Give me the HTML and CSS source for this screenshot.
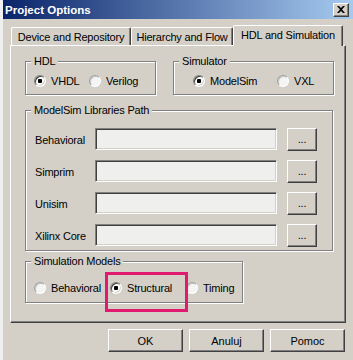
FILE: index.html
```html
<!DOCTYPE html>
<html lang="pl">
<head>
    <meta charset="UTF-8">
    <meta name="viewport" content="width=device-width, initial-scale=1.0">
    <title>Project Options</title>
    <link rel="stylesheet" href="styles.css">
</head>
<body>
    <div class="window">
        <div class="titlebar">
            <span class="title">Project Options</span>
            <span class="close">
                <svg width="8" height="7" viewBox="0 0 8 7"><path d="M0 0h2l2 2 2-2h2L5 3.5 8 7H6L4 5 2 7H0l3-3.5z" fill="#000"/></svg>
            </span>
        </div>

        <div class="dialog-body">
            <div class="tabs">
                <div class="tab tab-device">Device and Repository</div>
                <div class="tab tab-flow">Hierarchy and Flow</div>
                <div class="tab tab-hdl active">HDL and Simulation</div>
            </div>

            <div class="panel">
                <div class="top-row">
                    <fieldset class="group group-hdl">
                        <legend>HDL</legend>
                        <div class="options">
                            <label class="option opt-vhdl"><span class="radio checked"></span>VHDL</label>
                            <label class="option"><span class="radio"></span>Verilog</label>
                        </div>
                    </fieldset>
                    <fieldset class="group group-sim">
                        <legend>Simulator</legend>
                        <div class="options">
                            <label class="option opt-modelsim"><span class="radio checked"></span>ModelSim</label>
                            <label class="option"><span class="radio"></span>VXL</label>
                        </div>
                    </fieldset>
                </div>

                <fieldset class="group group-libs">
                    <legend>ModelSim Libraries Path</legend>
                    <div class="lib-grid">
                        <span class="lib-label">Behavioral</span>
                        <span class="field"></span>
                        <span class="browse">...</span>

                        <span class="lib-label">Simprim</span>
                        <span class="field"></span>
                        <span class="browse">...</span>

                        <span class="lib-label">Unisim</span>
                        <span class="field"></span>
                        <span class="browse">...</span>

                        <span class="lib-label">Xilinx Core</span>
                        <span class="field"></span>
                        <span class="browse">...</span>
                    </div>
                </fieldset>

                <fieldset class="group group-models">
                    <legend>Simulation Models</legend>
                    <div class="options">
                        <label class="option opt-model"><span class="radio"></span>Behavioral</label>
                        <label class="option opt-model"><span class="radio checked"></span>Structural</label>
                        <label class="option"><span class="radio"></span>Timing</label>
                    </div>
                </fieldset>
            </div>

            <div class="buttons">
                <button class="btn">OK</button>
                <button class="btn">Anuluj</button>
                <button class="btn">Pomoc</button>
            </div>
        </div>

        <div class="highlight"></div>
    </div>
</body>
</html>
```

FILE: styles.css
```css
/* base */
body {
    margin: 0;
    width: 353px;
    height: 360px;
    overflow: hidden;
    background-color: #f0f0f0;
    font-family: "Liberation Sans", Arial, sans-serif;
    font-size: 11px;
    letter-spacing: -0.2px;
    color: #000;
}
.window {
    position: relative;
    margin-left: 3px;
    height: 360px;
    background-color: #d4d0c8;
}

/* title bar */
.titlebar {
    height: 19px;
    display: flex;
    align-items: center;
    justify-content: space-between;
    padding: 0 4px 0 2px;
    background: linear-gradient(to right, #0a246a, #a6caf0);
}
.title {
    color: #fff;
    font-weight: bold;
    font-size: 11.5px;
    letter-spacing: 0;
}
.close {
    width: 16px;
    height: 14px;
    box-sizing: border-box;
    display: flex;
    align-items: center;
    justify-content: center;
    background-color: #d4d0c8;
    border: 1px solid;
    border-color: #fff #404040 #404040 #fff;
    box-shadow: inset -1px -1px 0 #808080;
}

.dialog-body {
    padding: 6px 0 0 7px;
}

/* tabs */
.tabs {
    display: flex;
    align-items: flex-end;
    height: 20px;
    padding-left: 1px;
}
.tab {
    height: 18px;
    box-sizing: border-box;
    display: flex;
    align-items: center;
    justify-content: center;
    border: 1px solid;
    border-bottom: none;
    border-color: #fff #404040 transparent #fff;
    border-radius: 2px 2px 0 0;
    box-shadow: inset -1px 0 0 #808080;
}
.tab-device { width: 120px; }
.tab-flow { width: 102px; }
.tab-hdl { width: 110px; }
.tab.active {
    position: relative;
    z-index: 1;
    height: 21px;
    margin-bottom: -1px;
    padding-bottom: 2px;
    background-color: #d4d0c8;
}

/* panel */
.panel {
    width: 336px;
    height: 278px;
    box-sizing: border-box;
    padding: 9px 0 0 14px;
    border: 1px solid;
    border-color: #fff #404040 #404040 #fff;
    box-shadow: inset -1px -1px 0 #808080;
}
.top-row {
    display: flex;
    gap: 17px;
}

/* group boxes */
.group {
    margin: 0;
    padding-left: 0;
    padding-right: 0;
    min-inline-size: 0;
    box-sizing: border-box;
    border: 1px solid #808080;
    box-shadow: inset 1px 1px 0 #fff, 1px 1px 0 #fff;
}
.group legend {
    margin-left: 5px;
    padding: 0 3px;
    line-height: 13px;
    background-color: #d4d0c8;
}
.group-hdl {
    width: 131px;
    padding-top: 6px;
    padding-bottom: 7px;
}
.group-hdl .options { padding-left: 8px; }
.group-sim {
    width: 161px;
    padding-top: 6px;
    padding-bottom: 7px;
}
.group-sim .options { padding-left: 19px; }
.group-libs {
    width: 308px;
    margin-top: 9px;
    padding-top: 11px;
    padding-bottom: 3px;
}
.group-models {
    width: 218px;
    margin-top: 4px;
    padding-top: 13px;
    padding-bottom: 8px;
}
.group-models .options { padding-left: 8px; }

/* radio buttons */
.options {
    display: flex;
}
.option {
    display: flex;
    align-items: center;
    gap: 5px;
    height: 13px;
}
.opt-vhdl { width: 55px; }
.opt-modelsim { width: 84px; }
.opt-model { width: 76px; }
.radio {
    width: 12px;
    height: 12px;
    box-sizing: border-box;
    border-radius: 50%;
    border: 1px solid;
    border-color: #a0a0a0 #fff #fff #a0a0a0;
    box-shadow: inset 1px 1px 0 #c8c8c8;
    background-color: #f4f4f4;
}
.radio.checked {
    border-color: #808080 #fff #fff #808080;
    box-shadow: inset 1px 1px 0 #404040, inset -1px -1px 0 #d4d0c8;
    background: radial-gradient(circle, #000 2px, #fff 2.5px);
}

/* library paths */
.lib-grid {
    display: grid;
    grid-template-columns: 60px 182px 40px;
    grid-auto-rows: 23px;
    row-gap: 9px;
    padding-left: 9px;
}
.lib-label {
    align-self: center;
}
.field {
    height: 22px;
    box-sizing: border-box;
    border: 1px solid;
    border-color: #808080 #fff #fff #808080;
    box-shadow: inset 1px 1px 0 #404040, inset -1px -1px 0 #d4d0c8;
    background-color: #efefed;
}
.browse {
    display: flex;
    align-items: center;
    justify-content: center;
    margin-left: 10px;
    box-sizing: border-box;
    border: 1px solid;
    border-color: #fff #404040 #404040 #fff;
    box-shadow: inset -1px -1px 0 #808080;
    padding-bottom: 2px;
}

/* dialog buttons */
.buttons {
    width: 336px;
    display: flex;
    justify-content: flex-end;
    gap: 6px;
    margin-top: 6px;
    padding-right: 1px;
    box-sizing: border-box;
}
.btn {
    width: 75px;
    height: 23px;
    padding: 0;
    font: inherit;
    color: #000;
    background-color: #d4d0c8;
    border: 1px solid;
    border-color: #fff #404040 #404040 #fff;
    box-shadow: inset -1px -1px 0 #808080;
}

/* marker over the selected option */
.highlight {
    position: absolute;
    left: 102px;
    top: 272px;
    width: 83px;
    height: 40px;
    box-sizing: border-box;
    border: 3px solid #e01a6e;
}
```
